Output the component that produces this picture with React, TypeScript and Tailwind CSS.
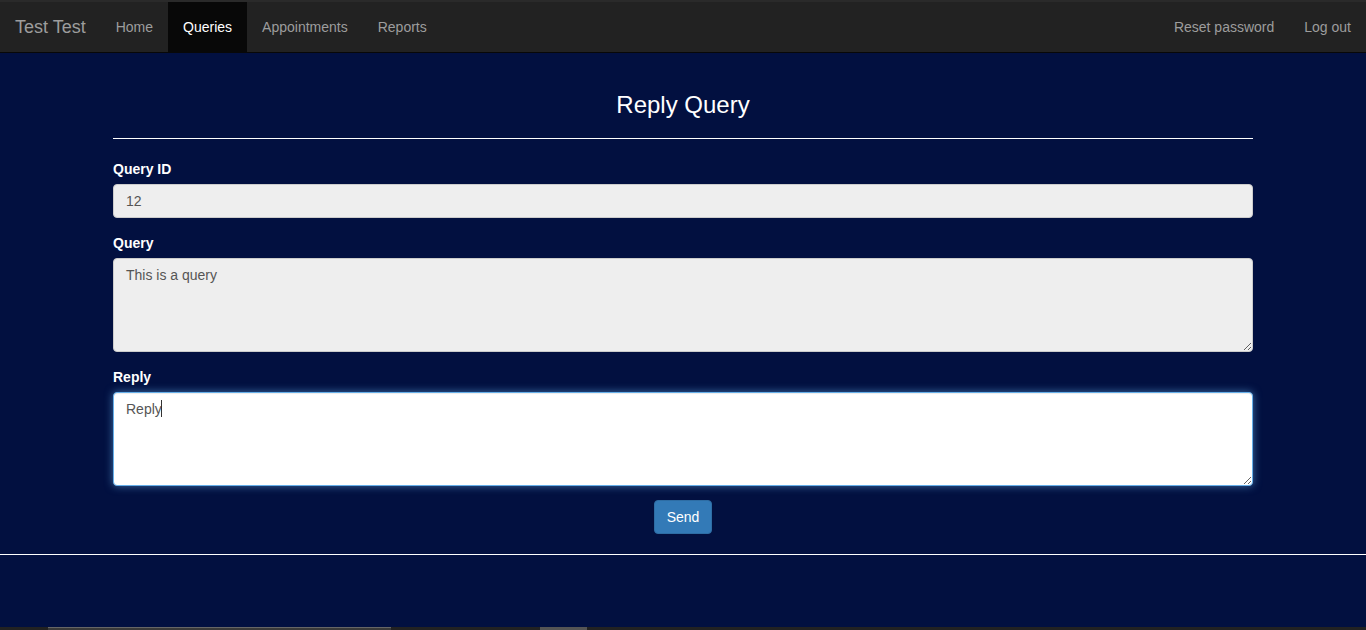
import React from "react";

function NavLink({ label, active }: { label: string; active?: boolean }) {
  return (
    <a
      className={
        active
          ? "flex items-center px-[15px] h-full bg-[#080808] text-white"
          : "flex items-center px-[15px] h-full text-[#9d9d9d]"
      }
    >
      {label}
    </a>
  );
}

function App() {
  return (
    <div className="h-[630px] flex flex-col bg-[#021040] text-[14px] font-['Liberation_Sans',Arial,sans-serif] overflow-hidden">
      {/* navbar */}
      <nav className="h-[53px] shrink-0 flex justify-between bg-[#222] border-t-2 border-t-[#2a2a2a] border-b border-b-[#080808]">
        <div className="flex h-full">
          <a className="flex items-center px-[15px] text-[18px] text-[#9d9d9d]">Test Test</a>
          <NavLink label="Home" />
          <NavLink label="Queries" active />
          <NavLink label="Appointments" />
          <NavLink label="Reports" />
        </div>
        <div className="flex h-full">
          <NavLink label="Reset password" />
          <NavLink label="Log out" />
        </div>
      </nav>

      {/* form */}
      <div className="w-[1140px] mx-auto pt-[39px]">
        <h3 className="text-[24px] leading-[26px] text-white text-center">Reply Query</h3>
        <hr className="mt-[20px] mb-[20px] border-t border-white" />

        <div className="flex flex-col">
          <label className="font-bold text-white leading-[20px] mb-[5px]">Query ID</label>
          <input
            disabled
            value="12"
            className="h-[34px] px-3 rounded-[4px] border border-[#ccc] bg-[#eee] text-[#555] outline-none"
          />
        </div>

        <div className="flex flex-col mt-[15px]">
          <label className="font-bold text-white leading-[20px] mb-[5px]">Query</label>
          <textarea
            disabled
            rows={4}
            value="This is a query"
            className="h-[94px] px-3 py-[6px] leading-[20px] rounded-[4px] border border-[#ccc] bg-[#eee] text-[#555] outline-none resize-y"
          />
        </div>

        <div className="flex flex-col mt-[15px]">
          <label className="font-bold text-white leading-[20px] mb-[5px]">Reply</label>
          <div className="relative">
            <textarea
              rows={4}
              defaultValue="Reply"
              className="block w-full h-[94px] px-3 py-[6px] leading-[20px] rounded-[4px] border border-[#66afe9] bg-white text-[#555] outline-none resize-y shadow-[inset_0_1px_1px_rgba(0,0,0,0.075),0_0_8px_rgba(102,175,233,0.6)]"
            />
            <span className="absolute left-[48px] top-[8px] w-px h-[17px] bg-[#333]" />
          </div>
        </div>

        <div className="flex justify-center mt-[14px]">
          <button className="h-[34px] px-3 rounded-[4px] bg-[#337ab7] border border-[#2e6da4] text-white">
            Send
          </button>
        </div>
      </div>

      <hr className="mt-[20px] border-t border-white w-full" />

      <div className="flex-1" />

      {/* bottom strip */}
      <div className="h-[3px] shrink-0 flex bg-[#222]">
        <div className="ml-[48px] w-[343px] bg-[#3a3a3a] border-t border-[#666]" />
        <div className="ml-[149px] w-[47px] bg-[#555]" />
      </div>
    </div>
  );
}

export default App;
